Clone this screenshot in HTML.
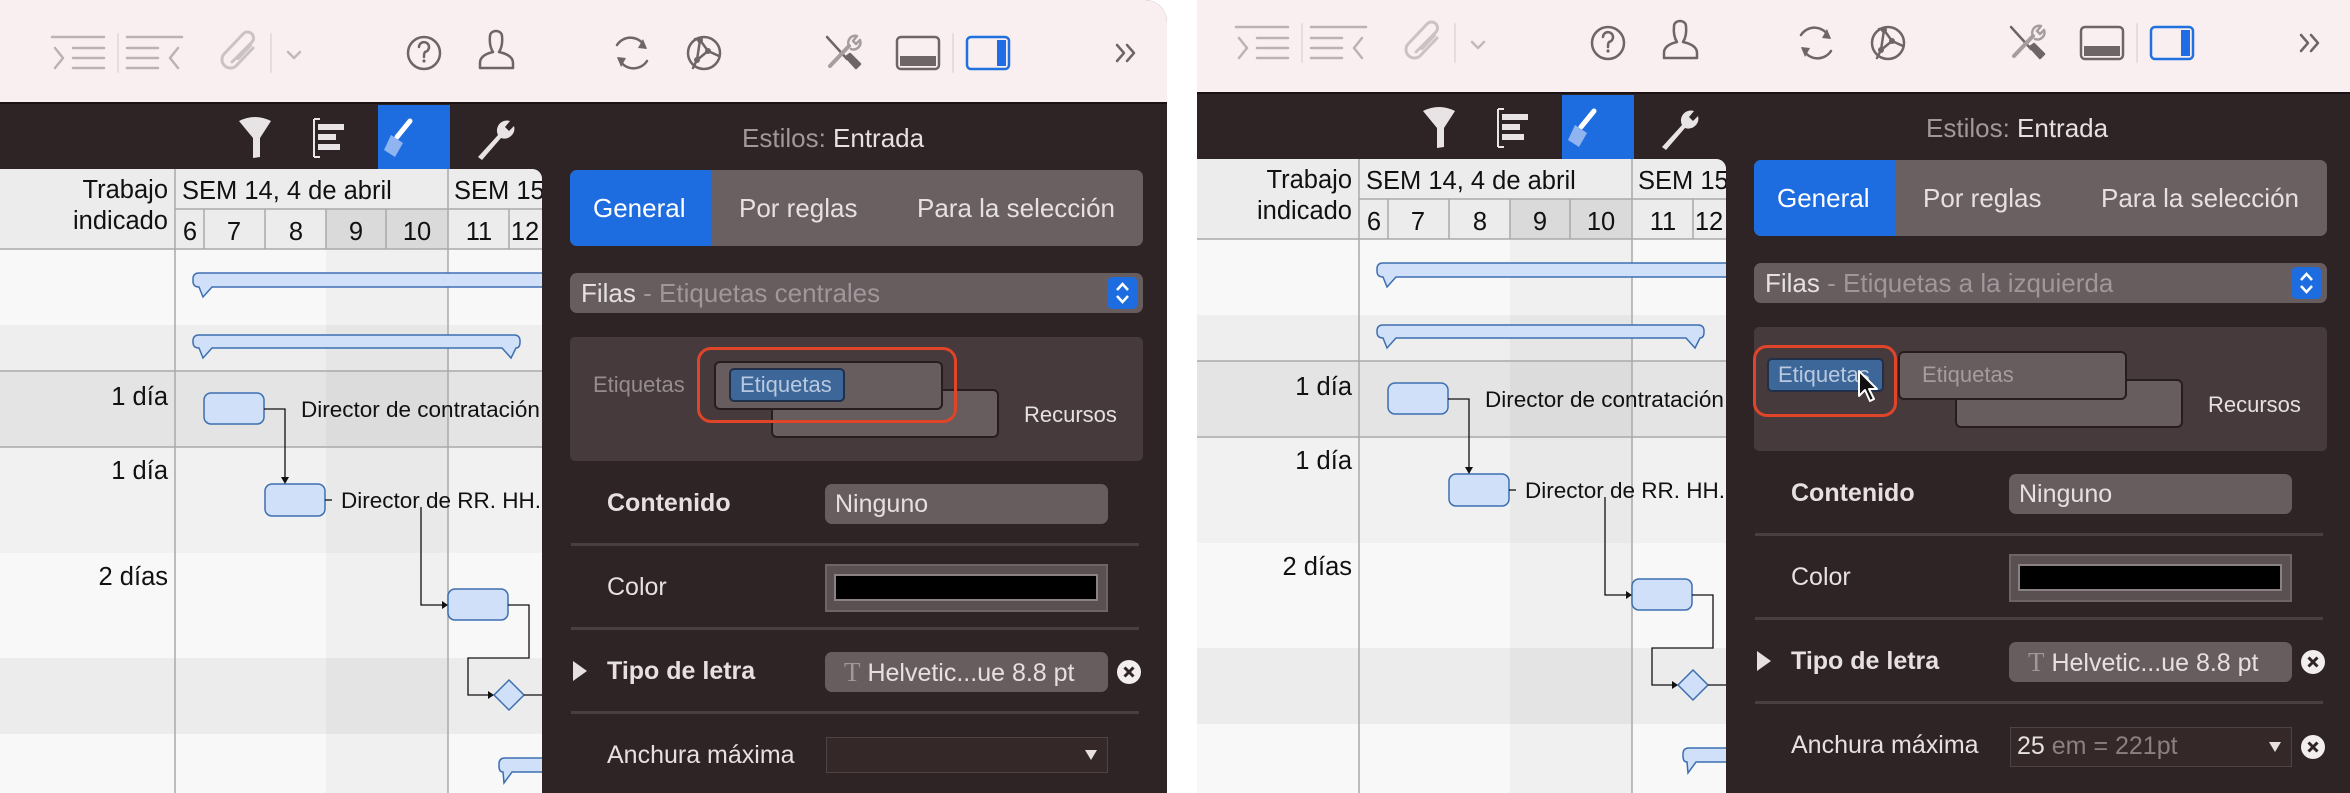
<!DOCTYPE html>
<html><head><meta charset="utf-8">
<style>
*{margin:0;padding:0;box-sizing:border-box}
body{width:2350px;height:793px;background:#fff;position:relative;overflow:hidden;font-family:"Liberation Sans",Arial,sans-serif}
.wrap{position:absolute;top:0;overflow:hidden}
.p{position:absolute;width:1167px;height:803px;background:#2e2325;overflow:hidden}
.a{position:absolute;white-space:nowrap}
.tb{position:absolute;left:0;top:0;width:1167px;height:104px;background:#f9eff0;border-bottom:2px solid #1a1214}
.t{color:#e6e0e1;font-size:25px;line-height:30px}
.g{color:#a0979a}
.fld{position:absolute;background:#675d5f;border-radius:7px}
.sep{position:absolute;left:571px;width:568px;height:3px;background:#4a3e40}
</style></head><body>

<!-- LEFT PANEL -->
<div class="wrap" style="left:0;width:1167px;height:793px;border-top-right-radius:22px">
<div class="p" style="left:0;top:0">
 <div class="tb"></div>
 <svg class="a" style="left:0;top:0" width="1167" height="105" fill="none" stroke-linecap="round" stroke-linejoin="round">
  <g stroke="#bcb1b3" stroke-width="2.5">
   <path d="M52 37H104M73 48H104M73 58H104M73 68H104M55 48L63 58L55 68"/>
   <path d="M127 37H182M127 48H158M127 58H158M127 68H158M178 48L170 58L178 68"/>
  </g>
  <path d="M118 34V72M271 34V72M953 34V72" stroke="#e6dcdd" stroke-width="2"/>
  <g stroke="#cbc2c3" stroke-width="3"><path d="M232 62L252 42A6 6 0 0 0 243 34L225 53A8 8 0 0 0 236 66L253 48"/><path d="M238 58L250 45" stroke-width="4"/></g>
  <path d="M288 52L294 58L300 52" stroke="#c2b8b9" stroke-width="2.5"/>
  <g stroke="#6e6566" stroke-width="2.5">
   <circle cx="424" cy="53" r="16"/>
   <path d="M419 47A5 5 0 1 1 425 52Q424 53 424 57"/>
   <path d="M490 36A6 5 0 0 1 502 36Q503 46 499 52Q513 55 513 63V68H480V63Q480 55 493 52Q489 46 490 36Z"/>
   <path d="M645 47A16 16 0 0 0 617 45M619 59A16 16 0 0 0 647 61"/>
   <circle cx="704" cy="53" r="16"/>
   <path d="M700 40L708 51L697 60L700 40M708 51L719 56M697 60L693 68M700 40L695 39"/>
   <path d="M827 37L847 59"/>
   <path d="M846 57L856 68L860 64L850 54Z" fill="#6e6566"/>
   <path d="M830 66L849 46" stroke="#a69d9e" stroke-width="4"/>
   <path d="M849 46A7 7 0 0 1 857 36L853 41L856 44L860 40A7 7 0 0 1 851 49" stroke="#a69d9e" stroke-width="2.5"/>
   <rect x="897" y="37" width="42" height="32" rx="4"/>
  </g>
  <g fill="#6e6566"><circle cx="424" cy="61" r="1.6"/><path d="M643 39L647 49L638 48Z M621 67L617 57L626 58Z"/><circle cx="700" cy="40" r="3"/><circle cx="708" cy="51" r="3"/><circle cx="697" cy="60" r="3"/><rect x="900" y="56" width="36" height="10"/></g>
  <rect x="967" y="37" width="42" height="32" rx="4" stroke="#2070e0" stroke-width="2.5"/>
  <rect x="997" y="40" width="9" height="26" fill="#1e6de4"/>
  <path d="M1117 45L1124 53L1117 61M1127 45L1134 53L1127 61" stroke="#6e6566" stroke-width="2.5"/>
 </svg>
 <div class="a" style="left:378px;top:105px;width:72px;height:64px;background:#1d6ce0"></div>
 <svg class="a" style="left:0;top:105px" width="542" height="64">
  <g fill="#e8e3e4" stroke="none">
   <path d="M239 16Q255 8 271 16L260 33V52L253 53V33Z"/>
   <rect x="318" y="19" width="26" height="6"/><rect x="318" y="29" width="18" height="6"/><rect x="318" y="39" width="22" height="6"/>
   <path d="M478 52L498 30A10 10 0 0 1 510 16L505 22L509 26L514 21A10 10 0 0 1 501 33L482 55Z"/>
  </g>
  <path d="M314 14V52M314 14H320M314 52H320" stroke="#e8e3e4" stroke-width="2" fill="none"/>
  <path d="M410 16L397 32" stroke="#fff" stroke-width="5" stroke-linecap="round"/>
  <path d="M391 30L403 38L395 52L384 45Z" fill="#8fb4f0"/>
 </svg>
 <div class="a" style="left:0;top:169px;width:542px;height:634px;border-top-right-radius:10px;overflow:hidden;background:#f8f8f8">
 <svg width="542" height="634" viewBox="0 169 542 634" style="display:block;font-family:'Liberation Sans',Arial,sans-serif">
  <rect x="0" y="169" width="542" height="80" fill="#ececec"/>
  <rect x="326" y="209" width="122" height="40" fill="#dadada"/>
  <rect x="0" y="249" width="542" height="76" fill="#f8f8f8"/>
  <rect x="0" y="325" width="542" height="46" fill="#eeeeee"/>
  <rect x="0" y="371" width="542" height="76" fill="#e4e4e4"/>
  <rect x="0" y="447" width="542" height="106" fill="#f1f1f1"/>
  <rect x="0" y="553" width="542" height="105" fill="#f8f8f8"/>
  <rect x="0" y="658" width="542" height="76" fill="#ececec"/>
  <rect x="0" y="734" width="542" height="70" fill="#f8f8f8"/>
  <rect x="326" y="249" width="122" height="555" fill="#000" opacity="0.03"/>
  <g stroke="#a9a9a9" stroke-width="1.5">
   <path d="M175 209H542M0 249H542M0 371H542M0 447H542"/>
   <path d="M175 169V803M448 169V803M204 209V249M265 209V249M326 209V249M386 209V249M509 209V249"/>
  </g>
  <g font-size="25.5" fill="#111">
   <text x="168" y="198" text-anchor="end">Trabajo</text>
   <text x="168" y="229" text-anchor="end">indicado</text>
   <text x="182" y="199">SEM 14, 4 de abril</text>
   <text x="454" y="199">SEM 15</text>
   <g text-anchor="middle"><text x="190" y="240">6</text><text x="234" y="240">7</text><text x="296" y="240">8</text><text x="356" y="240">9</text><text x="417" y="240">10</text><text x="479" y="240">11</text><text x="525" y="240">12</text></g>
   <text x="168" y="405" text-anchor="end">1 día</text>
   <text x="168" y="479" text-anchor="end">1 día</text>
   <text x="168" y="585" text-anchor="end">2 días</text>
  </g>
  <g fill="#cfe0f8" stroke="#3d6fb0" stroke-width="1.5">
   <path d="M199 273H560V287H212L203 297L199 287Q193 287 193 281V279Q193 273 199 273Z"/>
   <path d="M199 335H514Q520 335 520 341V342Q520 348 516 348L511 358L502 348H212L203 358L199 348Q193 348 193 342V341Q193 335 199 335Z"/>
   <rect x="204" y="393" width="60" height="31" rx="7"/>
   <rect x="265" y="484" width="60" height="32" rx="7"/>
   <rect x="448" y="589" width="60" height="31" rx="7"/>
   <path d="M509 680L524 695L509 710L494 695Z"/>
   <path d="M505 758H560V772H512L504 783L503 772Q499 772 499 766V764Q499 758 505 758Z"/>
  </g>
  <g stroke="#111" stroke-width="1.3" fill="none">
   <path d="M264 409H285V480"/><path d="M421 507V605H444"/><path d="M325 500H332"/>
   <path d="M508 605H529V658H468V695H490"/><path d="M524 695H542"/>
  </g>
  <g fill="#111"><path d="M281 477H289L285 484Z"/><path d="M442 601V609L448 605Z"/><path d="M488 691V699L494 695Z"/></g>
  <g font-size="22.5" fill="#111"><text x="301" y="417">Director de contratación</text><text x="341" y="508">Director de RR. HH.</text></g>
 </svg>
 </div>
 <div class="a t" style="left:742px;top:123px;font-size:26px"><span class="g">Estilos:</span> Entrada</div>
 <div class="a" style="left:570px;top:170px;width:573px;height:76px;background:#6a6062;border-radius:7px;overflow:hidden">
  <div class="a" style="left:0;top:0;width:142px;height:76px;background:#1d6ce0"></div>
  <div class="a t" style="left:23px;top:23px;color:#fff;font-size:26px">General</div>
  <div class="a t" style="left:169px;top:23px;font-size:26px">Por reglas</div>
  <div class="a t" style="left:347px;top:23px;font-size:26px">Para la selección</div>
 </div>
 <div class="fld" style="left:570px;top:273px;width:573px;height:40px">
  <div class="a t" style="left:11px;top:5px;font-size:26px">Filas <span class="g">- Etiquetas centrales</span></div>
  <div class="a" style="left:537px;top:4px;width:31px;height:32px;background:#1d6ce0;border-radius:6px">
   <svg width="31" height="32" fill="none" stroke="#fff" stroke-width="2.5"><path d="M10 13L15.5 7L21 13M10 19L15.5 25L21 19"/></svg>
  </div>
 </div>
 <div class="a" style="left:570px;top:337px;width:573px;height:124px;background:#463a3c;border-radius:5px"></div>
 <div class="a t g" style="left:593px;top:370px;font-size:22px;color:#968c8e">Etiquetas</div>
 <div class="a" style="left:771px;top:389px;width:228px;height:49px;background:#675c5e;border:2px solid #271d1f;border-radius:6px"></div>
 <div class="a" style="left:714px;top:361px;width:229px;height:49px;background:#675c5e;border:2px solid #271d1f;border-radius:6px"></div>
 <div class="a" style="left:729px;top:368px;width:116px;height:34px;background:#3d6699;border:2px solid #21304a;border-radius:5px;color:#b9c9df;font-size:22px;line-height:30px;padding-left:9px">Etiquetas</div>
 <div class="a" style="left:697px;top:347px;width:260px;height:76px;border:3px solid #e0452a;border-radius:14px"></div>
 <div class="a t" style="left:1024px;top:400px;font-size:22px">Recursos</div>

 <div class="a t" style="left:607px;top:488px;font-weight:bold">Contenido</div>
 <div class="fld" style="left:825px;top:484px;width:283px;height:40px"><div class="a t" style="left:10px;top:5px">Ninguno</div></div>
 <div class="sep" style="top:543px"></div>
 <div class="a t" style="left:607px;top:572px">Color</div>
 <div class="a" style="left:825px;top:564px;width:283px;height:48px;background:#5a4f51;border:2px solid #6e6466"></div>
 <div class="a" style="left:834px;top:574px;width:264px;height:27px;background:#000;border:2px solid #8a8183"></div>
 <div class="sep" style="top:627px"></div>
 <svg class="a" style="left:572px;top:660px" width="16" height="22"><path d="M1 1L15 11L1 21Z" fill="#e6e0e1"/></svg>
 <div class="a t" style="left:607px;top:656px;font-weight:bold">Tipo de letra</div>
 <div class="fld" style="left:825px;top:652px;width:283px;height:40px">
  <div class="a t" style="left:19px;top:5px"><span style="font-family:'Liberation Serif',serif;color:#a0979a;font-size:27px">T</span> Helvetic...ue 8.8 pt</div>
 </div>
 <svg class="a" style="left:1116px;top:659px" width="26" height="26"><circle cx="13" cy="13" r="12" fill="#f2eeee"/><path d="M8.5 8.5L17.5 17.5M17.5 8.5L8.5 17.5" stroke="#2e2325" stroke-width="3"/></svg>
 <div class="sep" style="top:711px"></div>
 <div class="a t" style="left:607px;top:740px">Anchura máxima</div>
 <div class="a" style="left:826px;top:737px;width:282px;height:36px;background:#342829;border:1px solid #4e4345"></div>
 <svg class="a" style="left:1084px;top:749px" width="14" height="12"><path d="M1 1H13L7 11Z" fill="#e6e0e1"/></svg>
</div>
</div>

<!-- RIGHT PANEL -->
<div class="wrap" style="left:1197px;width:1153px;height:793px">
<div class="p" style="left:-13px;top:-10px">
 <div class="tb"></div>
 <svg class="a" style="left:0;top:0" width="1167" height="105" fill="none" stroke-linecap="round" stroke-linejoin="round">
  <g stroke="#bcb1b3" stroke-width="2.5">
   <path d="M52 37H104M73 48H104M73 58H104M73 68H104M55 48L63 58L55 68"/>
   <path d="M127 37H182M127 48H158M127 58H158M127 68H158M178 48L170 58L178 68"/>
  </g>
  <path d="M118 34V72M271 34V72M953 34V72" stroke="#e6dcdd" stroke-width="2"/>
  <g stroke="#cbc2c3" stroke-width="3"><path d="M232 62L252 42A6 6 0 0 0 243 34L225 53A8 8 0 0 0 236 66L253 48"/><path d="M238 58L250 45" stroke-width="4"/></g>
  <path d="M288 52L294 58L300 52" stroke="#c2b8b9" stroke-width="2.5"/>
  <g stroke="#6e6566" stroke-width="2.5">
   <circle cx="424" cy="53" r="16"/>
   <path d="M419 47A5 5 0 1 1 425 52Q424 53 424 57"/>
   <path d="M490 36A6 5 0 0 1 502 36Q503 46 499 52Q513 55 513 63V68H480V63Q480 55 493 52Q489 46 490 36Z"/>
   <path d="M645 47A16 16 0 0 0 617 45M619 59A16 16 0 0 0 647 61"/>
   <circle cx="704" cy="53" r="16"/>
   <path d="M700 40L708 51L697 60L700 40M708 51L719 56M697 60L693 68M700 40L695 39"/>
   <path d="M827 37L847 59"/>
   <path d="M846 57L856 68L860 64L850 54Z" fill="#6e6566"/>
   <path d="M830 66L849 46" stroke="#a69d9e" stroke-width="4"/>
   <path d="M849 46A7 7 0 0 1 857 36L853 41L856 44L860 40A7 7 0 0 1 851 49" stroke="#a69d9e" stroke-width="2.5"/>
   <rect x="897" y="37" width="42" height="32" rx="4"/>
  </g>
  <g fill="#6e6566"><circle cx="424" cy="61" r="1.6"/><path d="M643 39L647 49L638 48Z M621 67L617 57L626 58Z"/><circle cx="700" cy="40" r="3"/><circle cx="708" cy="51" r="3"/><circle cx="697" cy="60" r="3"/><rect x="900" y="56" width="36" height="10"/></g>
  <rect x="967" y="37" width="42" height="32" rx="4" stroke="#2070e0" stroke-width="2.5"/>
  <rect x="997" y="40" width="9" height="26" fill="#1e6de4"/>
  <path d="M1117 45L1124 53L1117 61M1127 45L1134 53L1127 61" stroke="#6e6566" stroke-width="2.5"/>
 </svg>
 <div class="a" style="left:378px;top:105px;width:72px;height:64px;background:#1d6ce0"></div>
 <svg class="a" style="left:0;top:105px" width="542" height="64">
  <g fill="#e8e3e4" stroke="none">
   <path d="M239 16Q255 8 271 16L260 33V52L253 53V33Z"/>
   <rect x="318" y="19" width="26" height="6"/><rect x="318" y="29" width="18" height="6"/><rect x="318" y="39" width="22" height="6"/>
   <path d="M478 52L498 30A10 10 0 0 1 510 16L505 22L509 26L514 21A10 10 0 0 1 501 33L482 55Z"/>
  </g>
  <path d="M314 14V52M314 14H320M314 52H320" stroke="#e8e3e4" stroke-width="2" fill="none"/>
  <path d="M410 16L397 32" stroke="#fff" stroke-width="5" stroke-linecap="round"/>
  <path d="M391 30L403 38L395 52L384 45Z" fill="#8fb4f0"/>
 </svg>
 <div class="a" style="left:0;top:169px;width:542px;height:634px;border-top-right-radius:10px;overflow:hidden;background:#f8f8f8">
 <svg width="542" height="634" viewBox="0 169 542 634" style="display:block;font-family:'Liberation Sans',Arial,sans-serif">
  <rect x="0" y="169" width="542" height="80" fill="#ececec"/>
  <rect x="326" y="209" width="122" height="40" fill="#dadada"/>
  <rect x="0" y="249" width="542" height="76" fill="#f8f8f8"/>
  <rect x="0" y="325" width="542" height="46" fill="#eeeeee"/>
  <rect x="0" y="371" width="542" height="76" fill="#e4e4e4"/>
  <rect x="0" y="447" width="542" height="106" fill="#f1f1f1"/>
  <rect x="0" y="553" width="542" height="105" fill="#f8f8f8"/>
  <rect x="0" y="658" width="542" height="76" fill="#ececec"/>
  <rect x="0" y="734" width="542" height="70" fill="#f8f8f8"/>
  <rect x="326" y="249" width="122" height="555" fill="#000" opacity="0.03"/>
  <g stroke="#a9a9a9" stroke-width="1.5">
   <path d="M175 209H542M0 249H542M0 371H542M0 447H542"/>
   <path d="M175 169V803M448 169V803M204 209V249M265 209V249M326 209V249M386 209V249M509 209V249"/>
  </g>
  <g font-size="25.5" fill="#111">
   <text x="168" y="198" text-anchor="end">Trabajo</text>
   <text x="168" y="229" text-anchor="end">indicado</text>
   <text x="182" y="199">SEM 14, 4 de abril</text>
   <text x="454" y="199">SEM 15</text>
   <g text-anchor="middle"><text x="190" y="240">6</text><text x="234" y="240">7</text><text x="296" y="240">8</text><text x="356" y="240">9</text><text x="417" y="240">10</text><text x="479" y="240">11</text><text x="525" y="240">12</text></g>
   <text x="168" y="405" text-anchor="end">1 día</text>
   <text x="168" y="479" text-anchor="end">1 día</text>
   <text x="168" y="585" text-anchor="end">2 días</text>
  </g>
  <g fill="#cfe0f8" stroke="#3d6fb0" stroke-width="1.5">
   <path d="M199 273H560V287H212L203 297L199 287Q193 287 193 281V279Q193 273 199 273Z"/>
   <path d="M199 335H514Q520 335 520 341V342Q520 348 516 348L511 358L502 348H212L203 358L199 348Q193 348 193 342V341Q193 335 199 335Z"/>
   <rect x="204" y="393" width="60" height="31" rx="7"/>
   <rect x="265" y="484" width="60" height="32" rx="7"/>
   <rect x="448" y="589" width="60" height="31" rx="7"/>
   <path d="M509 680L524 695L509 710L494 695Z"/>
   <path d="M505 758H560V772H512L504 783L503 772Q499 772 499 766V764Q499 758 505 758Z"/>
  </g>
  <g stroke="#111" stroke-width="1.3" fill="none">
   <path d="M264 409H285V480"/><path d="M421 507V605H444"/><path d="M325 500H332"/>
   <path d="M508 605H529V658H468V695H490"/><path d="M524 695H542"/>
  </g>
  <g fill="#111"><path d="M281 477H289L285 484Z"/><path d="M442 601V609L448 605Z"/><path d="M488 691V699L494 695Z"/></g>
  <g font-size="22.5" fill="#111"><text x="301" y="417">Director de contratación</text><text x="341" y="508">Director de RR. HH.</text></g>
 </svg>
 </div>
 <div class="a t" style="left:742px;top:123px;font-size:26px"><span class="g">Estilos:</span> Entrada</div>
 <div class="a" style="left:570px;top:170px;width:573px;height:76px;background:#6a6062;border-radius:7px;overflow:hidden">
  <div class="a" style="left:0;top:0;width:142px;height:76px;background:#1d6ce0"></div>
  <div class="a t" style="left:23px;top:23px;color:#fff;font-size:26px">General</div>
  <div class="a t" style="left:169px;top:23px;font-size:26px">Por reglas</div>
  <div class="a t" style="left:347px;top:23px;font-size:26px">Para la selección</div>
 </div>
 <div class="fld" style="left:570px;top:273px;width:573px;height:40px">
  <div class="a t" style="left:11px;top:5px;font-size:26px">Filas <span class="g">- Etiquetas a la izquierda</span></div>
  <div class="a" style="left:537px;top:4px;width:31px;height:32px;background:#1d6ce0;border-radius:6px">
   <svg width="31" height="32" fill="none" stroke="#fff" stroke-width="2.5"><path d="M10 13L15.5 7L21 13M10 19L15.5 25L21 19"/></svg>
  </div>
 </div>
 <div class="a" style="left:570px;top:337px;width:573px;height:124px;background:#463a3c;border-radius:5px"></div>
 <div class="a" style="left:771px;top:389px;width:228px;height:49px;background:#675c5e;border:2px solid #271d1f;border-radius:6px"></div>
 <div class="a" style="left:714px;top:361px;width:229px;height:49px;background:#675c5e;border:2px solid #271d1f;border-radius:6px;color:#a59c9d;font-size:22px;line-height:44px;padding-left:22px">Etiquetas</div>
 <div class="a" style="left:583px;top:368px;width:117px;height:34px;background:#3d6699;border:2px solid #21304a;border-radius:5px;color:#b9c9df;font-size:22px;line-height:30px;padding-left:9px">Etiquetas</div>
 <div class="a" style="left:569px;top:355px;width:144px;height:72px;border:3px solid #e0452a;border-radius:14px"></div>
 <svg class="a" style="left:672px;top:379px" width="26" height="36"><path d="M3 2V27L9 21L14 32L18 30L13 20H21Z" fill="#111" stroke="#fff" stroke-width="2" stroke-linejoin="round"/></svg>
 <div class="a t" style="left:1024px;top:400px;font-size:22px">Recursos</div>

 <div class="a t" style="left:607px;top:488px;font-weight:bold">Contenido</div>
 <div class="fld" style="left:825px;top:484px;width:283px;height:40px"><div class="a t" style="left:10px;top:5px">Ninguno</div></div>
 <div class="sep" style="top:543px"></div>
 <div class="a t" style="left:607px;top:572px">Color</div>
 <div class="a" style="left:825px;top:564px;width:283px;height:48px;background:#5a4f51;border:2px solid #6e6466"></div>
 <div class="a" style="left:834px;top:574px;width:264px;height:27px;background:#000;border:2px solid #8a8183"></div>
 <div class="sep" style="top:627px"></div>
 <svg class="a" style="left:572px;top:660px" width="16" height="22"><path d="M1 1L15 11L1 21Z" fill="#e6e0e1"/></svg>
 <div class="a t" style="left:607px;top:656px;font-weight:bold">Tipo de letra</div>
 <div class="fld" style="left:825px;top:652px;width:283px;height:40px">
  <div class="a t" style="left:19px;top:5px"><span style="font-family:'Liberation Serif',serif;color:#a0979a;font-size:27px">T</span> Helvetic...ue 8.8 pt</div>
 </div>
 <svg class="a" style="left:1116px;top:659px" width="26" height="26"><circle cx="13" cy="13" r="12" fill="#f2eeee"/><path d="M8.5 8.5L17.5 17.5M17.5 8.5L8.5 17.5" stroke="#2e2325" stroke-width="3"/></svg>
 <div class="sep" style="top:711px"></div>
 <div class="a t" style="left:607px;top:740px">Anchura máxima</div>
 <div class="a" style="left:826px;top:737px;width:282px;height:40px;background:#342829;border:1px solid #4e4345"></div>
 <div class="a t" style="left:833px;top:741px">25 <span style="color:#8a8082">em = 221pt</span></div>
 <svg class="a" style="left:1084px;top:751px" width="14" height="12"><path d="M1 1H13L7 11Z" fill="#e6e0e1"/></svg>
 <svg class="a" style="left:1116px;top:744px" width="26" height="26"><circle cx="13" cy="13" r="12" fill="#f2eeee"/><path d="M8.5 8.5L17.5 17.5M17.5 8.5L8.5 17.5" stroke="#2e2325" stroke-width="3"/></svg>
</div>
</div>
</body></html>
